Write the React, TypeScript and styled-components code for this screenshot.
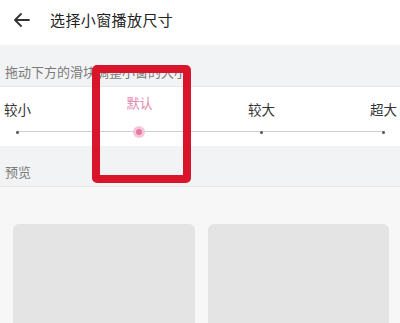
import React from 'react';
import styled, { createGlobalStyle } from 'styled-components';

const GlobalStyle = createGlobalStyle`
  body {
    margin: 0;
    font-family: "Noto Sans CJK SC", "Noto Sans", sans-serif;
    background: #f7f7f7;
  }
`;

const Page = styled.div`
  position: relative;
  width: 400px;
  height: 323px;
  overflow: hidden;
  background: #f7f7f7;
`;

const Header = styled.div`
  height: 45px;
  display: flex;
  align-items: center;
  background: #fff;
  padding: 0 0 6px 13px;
  box-sizing: border-box;
`;

const BackButton = styled.span`
  width: 18px;
  height: 18px;
  display: flex;
  color: #333;
`;

const Title = styled.div`
  margin-left: 19px;
  font-size: 15px;
  color: #222;
  letter-spacing: 0.4px;
`;

const Band = styled.div<{ $h: number; $pt: number }>`
  height: ${p => p.$h}px;
  box-sizing: border-box;
  padding: ${p => p.$pt}px 0 0 5px;
  background: #f2f3f4;
  font-size: 13px;
  color: #7a7a7a;
  line-height: 18px;
  border-bottom: 1px solid #e6e6e6;
`;

const SliderBox = styled.div`
  height: 59px;
  background: #fff;
  padding: 0 3px 0 4px;
  box-sizing: border-box;
`;

const Labels = styled.div`
  display: flex;
  justify-content: space-between;
  height: 38px;
`;

const Label = styled.span<{ $active?: boolean }>`
  font-size: ${p => (p.$active ? 13 : 13.5)}px;
  color: ${p => (p.$active ? '#e489ad' : '#333')};
  margin-top: ${p => (p.$active ? 7 : 13)}px;
  line-height: 18px;
  width: 27px;
  text-align: center;
`;

const Track = styled.div`
  position: relative;
  margin: 0 12px 0 12px;
  height: 14px;
  display: flex;
  justify-content: space-between;
  align-items: center;
  &::before {
    content: '';
    position: absolute;
    left: 0;
    right: 0;
    top: 6px;
    height: 1px;
    background: #cfcfcf;
  }
`;

const Tick = styled.span`
  position: relative;
  width: 3px;
  height: 3px;
  border-radius: 50%;
  background: #555;
`;

const Thumb = styled.span`
  position: relative;
  width: 6px;
  height: 6px;
  margin: 0 -2px;
  border-radius: 50%;
  background: #e27aa5;
  box-shadow: 0 0 0 3px #f4c6d8;
`;

const Preview = styled.div`
  display: flex;
  gap: 13px;
  padding: 37px 11px 0 13px;
`;

const Card = styled.div`
  flex: 1;
  height: 120px;
  background: #e4e4e4;
  border-radius: 6px;
`;

const Highlight = styled.div`
  position: absolute;
  left: 92px;
  top: 65px;
  width: 99px;
  height: 118px;
  box-sizing: border-box;
  border: 8px solid #d8152a;
  border-radius: 5px;
`;

export default function App() {
  return (
    <Page>
      <GlobalStyle />
      <Header>
        <BackButton>
          <svg viewBox="0 0 18 18" width="18" height="18" fill="none" stroke="currentColor" strokeWidth="1.8" strokeLinecap="round" strokeLinejoin="round">
            <path d="M16 9H2M8 3L2 9l6 6" />
          </svg>
        </BackButton>
        <Title>选择小窗播放尺寸</Title>
      </Header>
      <Band $h={42} $pt={18}>拖动下方的滑块调整小窗的大小</Band>
      <SliderBox>
        <Labels>
          <Label>较小</Label>
          <Label $active>默认</Label>
          <Label>较大</Label>
          <Label>超大</Label>
        </Labels>
        <Track>
          <Tick />
          <Thumb />
          <Tick />
          <Tick />
        </Track>
      </SliderBox>
      <Band $h={41} $pt={17}>预览</Band>
      <Preview>
        <Card />
        <Card />
      </Preview>
      <Highlight />
    </Page>
  );
}
